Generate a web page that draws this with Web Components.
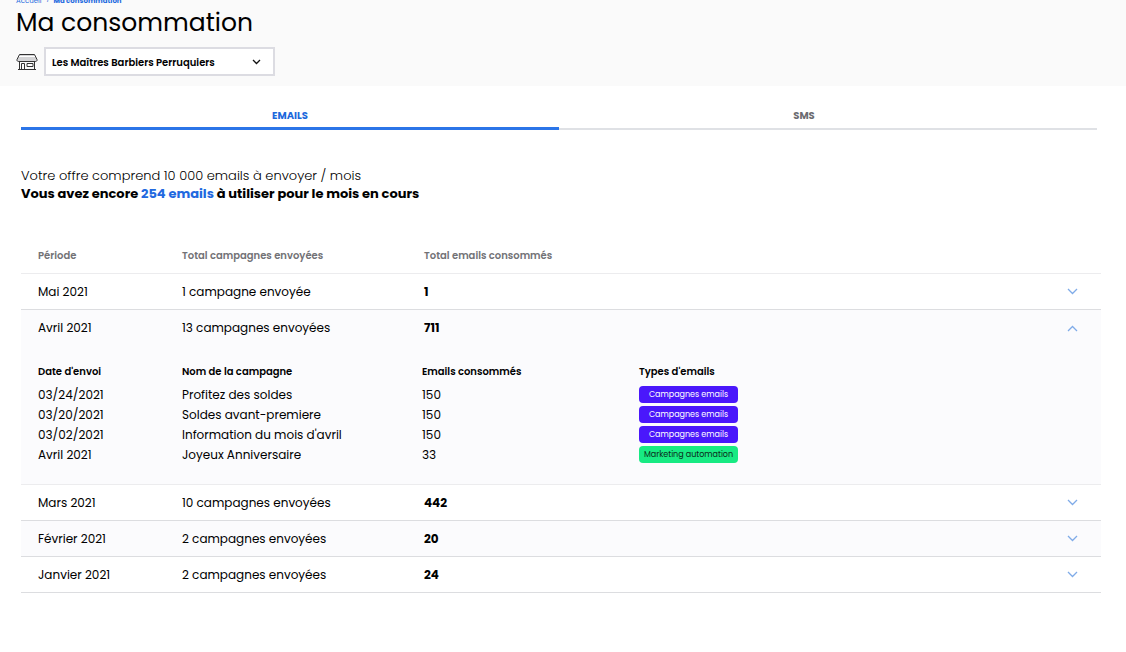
<!DOCTYPE html>
<html lang="fr">
<head>
<meta charset="utf-8">
<title>Ma consommation</title>
<style>
  body { margin: 0; background: #fff; color: #000; font-family: Poppins, Inter, sans-serif; font-size: 12px; line-height: 20px; }
</style>
</head>
<body>
<consumption-page></consumption-page>

<template id="t-page">
  <style>
    :host { display: block; }
    main { padding: 16px 25px 60px 21px; }
    tab-bar { margin-right: 4px; }
    quota-summary { margin: 37px 0 35px; }
  </style>
  <page-header heading="Ma consommation"></page-header>
  <main>
    <tab-bar></tab-bar>
    <quota-summary>
      <span slot="offer">Votre offre comprend 10 000 emails à envoyer / mois</span>
      <span slot="remaining">254 emails</span>
    </quota-summary>
    <period-table></period-table>
  </main>
</template>

<template id="t-header">
  <style>
    :host { display: block; background: #fafafa; padding: 0 16px 10px; }
    nav { display: flex; gap: 5px; margin-top: -5px; font-size: 7px; line-height: 12px; color: #1f6be0; }
    nav a { color: inherit; text-decoration: none; }
    nav a[aria-current] { font-weight: 700; }
    h1 { margin: 0; font-size: 25px; line-height: 32px; font-weight: 400; }
    .shop { display: flex; align-items: center; gap: 6px; margin-top: 8px; }
    .shop svg { display: block; }
    .field { display: grid; align-items: center; }
    .field > * { grid-area: 1 / 1; }
    select { appearance: none; width: 231px; height: 29px; margin: 0; padding: 2px 30px 0 6px; border: 2px solid #dcdce2; border-radius: 0; background: #fff; color: #000; font: 600 10px/20px Poppins, Inter, sans-serif; }
    .field svg { justify-self: end; margin-right: 14px; pointer-events: none; }
  </style>
  <nav aria-label="Fil d'Ariane"><a href="#">Accueil</a><span>›</span><a href="#" aria-current="page">Ma consommation</a></nav>
  <h1></h1>
  <div class="shop">
    <svg width="22" height="18" viewBox="0 0 22 18" fill="none" stroke="#333" aria-hidden="true">
      <path d="M3.500 1.500h15l2.500 5v1q-.5 1-1.500 1h-17q-1 0-1.500-1v-1z" fill="#d4d4d6"/>
      <path d="M3 3.500h16" stroke="#fff"/>
      <path d="M3.500 8.500v8h15v-8M5.500 16v-5.500h3V16" />
      <path d="M11 10.500h6v3h-6z" fill="#fff"/>
      <path d="M2 16.500h18"/>
    </svg>
    <div class="field">
      <select aria-label="Établissement"><option>Les Maîtres Barbiers Perruquiers</option></select>
      <svg width="9" height="6" viewBox="0 0 9 6" fill="none" stroke="#111" stroke-width="1.300" aria-hidden="true"><path d="M1 1l3.500 3.500L8 1"/></svg>
    </div>
  </div>
</template>

<template id="t-tabs">
  <style>
    :host { display: block; }
    div { display: grid; grid-template-columns: 1fr 1fr; align-items: end; }
    button { box-sizing: border-box; height: 28px; margin: 0; padding: 2px 0 0; border: 0; border-bottom: 2px solid #dfe1e5; background: none; color: #6b6b70; font: 700 10px/20px Poppins, Inter, sans-serif; cursor: pointer; }
    button:last-child { padding-right: 48px; }
    button[aria-selected="true"] { padding-top: 3px; border-bottom: 3px solid #2b75e8; color: #1b68dc; }
  </style>
  <div role="tablist"><button role="tab" aria-selected="true">EMAILS</button><button role="tab" aria-selected="false">SMS</button></div>
</template>

<template id="t-quota">
  <style>
    :host { display: block; font-size: 13px; line-height: 18px; }
    p { margin: 0; font-weight: 300; }
    p.left { font-weight: 700; }
    b { color: #2269df; font-weight: 700; }
  </style>
  <p><slot name="offer"></slot></p>
  <p class="left">Vous avez encore <b><slot name="remaining"></slot></b> à utiliser pour le mois en cours</p>
</template>

<template id="t-periods">
  <style>
    :host { display: block; }
    table { width: 100%; table-layout: fixed; border-collapse: separate; border-spacing: 0; }
    .c1 { width: 161px; } .c2 { width: 242px; } .c4 { width: 60px; }
    th, td { box-sizing: border-box; height: 36px; padding: 0; text-align: left; border-bottom: 1px solid #dcdde0; }
    th { border-color: #ececee; color: #727276; font-size: 10px; font-weight: 600; }
    tr > :first-child { padding-left: 17px; }
    td:nth-child(3) { font-weight: 700; }
    tr.alt td { background: #fbfbfd; }
    tr.open td { border-bottom: 0; }
    tr.alt td.detail { padding: 14px 0 20px; border-color: #ececee; }
    button { display: grid; place-items: center; width: 20px; height: 20px; margin: 0 0 0 21px; padding: 0; border: 0; background: none; cursor: pointer; }
    button svg { display: block; }
    [aria-expanded="true"] svg { transform: rotate(180deg); }
  </style>
  <table>
    <colgroup><col class="c1"><col class="c2"><col><col class="c4"></colgroup>
    <thead><tr><th>Période</th><th>Total campagnes envoyées</th><th>Total emails consommés</th><th></th></tr></thead>
    <tbody></tbody>
  </table>
</template>

<template id="t-campaigns">
  <style>
    :host { display: block; }
    table { width: 100%; table-layout: fixed; border-spacing: 0; }
    .c1 { width: 161px; } .c2 { width: 240px; } .c3 { width: 217px; }
    th, td { padding: 0; text-align: left; font-weight: 400; line-height: 19px; }
    th { height: 24px; padding-bottom: 2px; box-sizing: border-box; font-size: 10px; font-weight: 600; }
    tr > :first-child { padding-left: 17px; }
    td { height: 20px; }
  </style>
  <table>
    <colgroup><col class="c1"><col class="c2"><col class="c3"><col></colgroup>
    <thead><tr><th>Date d'envoi</th><th>Nom de la campagne</th><th>Emails consommés</th><th>Types d'emails</th></tr></thead>
    <tbody></tbody>
  </table>
</template>

<template id="t-badge">
  <style>
    :host { display: block; width: 99px; border-radius: 4px; background: #4a17fb; color: #fff; font-size: 8px; line-height: 17px; text-align: center; }
    :host([kind="automation"]) { background: #18ea83; color: #0b2a1a; }
  </style>
  <slot></slot>
</template>

<script>
  class Part extends HTMLElement {
    constructor() {
      super();
      this.attachShadow({ mode: 'open' }).append(
        document.getElementById(this.constructor.template).content.cloneNode(true));
    }
  }

  class PageHeader extends Part {
    static template = 't-header';
    connectedCallback() { this.shadowRoot.querySelector('h1').textContent = this.getAttribute('heading'); }
  }

  class TabBar extends Part {
    static template = 't-tabs';
    connectedCallback() {
      const tabs = this.shadowRoot.querySelectorAll('button');
      tabs.forEach(tab => tab.onclick = () =>
        tabs.forEach(t => t.setAttribute('aria-selected', t === tab)));
    }
  }

  class QuotaSummary extends Part { static template = 't-quota'; }
  class TypeBadge extends Part { static template = 't-badge'; }

  const campaigns = [
    ['03/24/2021', 'Profitez des soldes', 150, 'campaign'],
    ['03/20/2021', 'Soldes avant-premiere', 150, 'campaign'],
    ['03/02/2021', "Information du mois d'avril", 150, 'campaign'],
    ['Avril 2021', 'Joyeux Anniversaire', 33, 'automation']
  ];
  const labels = { campaign: 'Campagnes emails', automation: 'Marketing automation' };

  class CampaignTable extends Part {
    static template = 't-campaigns';
    connectedCallback() {
      this.shadowRoot.querySelector('tbody').innerHTML = campaigns.map(([date, name, count, kind]) =>
        `<tr><td>${date}</td><td>${name}</td><td>${count}</td><td><type-badge kind="${kind}">${labels[kind]}</type-badge></td></tr>`).join('');
    }
  }

  const periods = [
    ['Mai 2021', '1 campagne envoyée', 1],
    ['Avril 2021', '13 campagnes envoyées', 711, true],
    ['Mars 2021', '10 campagnes envoyées', 442],
    ['Février 2021', '2 campagnes envoyées', 20],
    ['Janvier 2021', '2 campagnes envoyées', 24]
  ];

  class PeriodTable extends Part {
    static template = 't-periods';
    connectedCallback() {
      const chevron = '<svg width="11" height="7" viewBox="0 0 11 7" fill="none" stroke="#7fabe8" stroke-width="1.300"><path d="M1 1l4.500 4.500L10 1"/></svg>';
      this.shadowRoot.querySelector('tbody').innerHTML = periods.map(([period, sent, total, open], i) => {
        const alt = i % 2 ? 'alt' : '';
        return `<tr class="${alt} ${open ? 'open' : ''}"><td>${period}</td><td>${sent}</td><td>${total}</td>` +
          `<td><button aria-expanded="${!!open}" aria-label="Détail ${period}">${chevron}</button></td></tr>` +
          (open ? `<tr class="${alt}"><td class="detail" colspan="4"><campaign-table></campaign-table></td></tr>` : '');
      }).join('');
    }
  }

  class ConsumptionPage extends Part { static template = 't-page'; }

  customElements.define('type-badge', TypeBadge);
  customElements.define('campaign-table', CampaignTable);
  customElements.define('period-table', PeriodTable);
  customElements.define('quota-summary', QuotaSummary);
  customElements.define('tab-bar', TabBar);
  customElements.define('page-header', PageHeader);
  customElements.define('consumption-page', ConsumptionPage);
</script>
</body>
</html>
